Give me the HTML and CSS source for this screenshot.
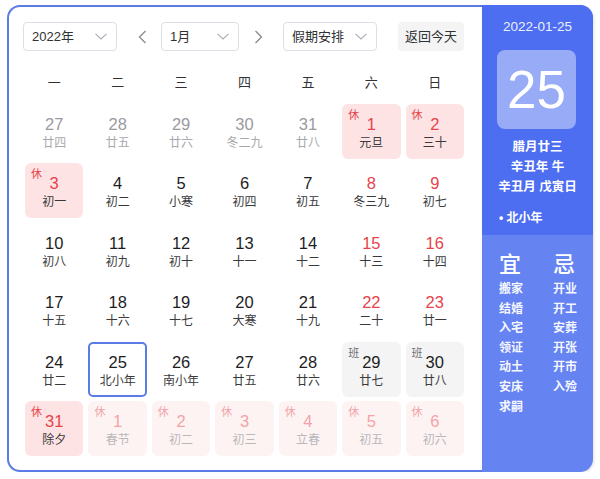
FILE: index.html
```html
<!DOCTYPE html>
<html lang="zh-CN">
<head>
<meta charset="utf-8">
<title>日历</title>
<link rel="stylesheet" href="styles.css">
</head>
<body>
<div class="card">
  <div class="main">
    <div class="toolbar">
      <div class="select sel-year"><span>2022年</span>
        <svg class="chev" width="12" height="7" viewBox="0 0 12 7"><path d="M0.5 0.8 L6 6 L11.5 0.8" fill="none" stroke="#a8abb2" stroke-width="1.1"/></svg>
      </div>
      <div class="arrow arrow-prev"><svg width="9" height="14" viewBox="0 0 9 14"><path d="M7.5 1 L1.5 7 L7.5 13" fill="none" stroke="#8a8d93" stroke-width="1.4"/></svg></div>
      <div class="select sel-month"><span>1月</span>
        <svg class="chev" width="12" height="7" viewBox="0 0 12 7"><path d="M0.5 0.8 L6 6 L11.5 0.8" fill="none" stroke="#a8abb2" stroke-width="1.1"/></svg>
      </div>
      <div class="arrow arrow-next"><svg width="9" height="14" viewBox="0 0 9 14"><path d="M1.5 1 L7.5 7 L1.5 13" fill="none" stroke="#8a8d93" stroke-width="1.4"/></svg></div>
      <div class="select sel-holiday"><span>假期安排</span>
        <svg class="chev" width="12" height="7" viewBox="0 0 12 7"><path d="M0.5 0.8 L6 6 L11.5 0.8" fill="none" stroke="#a8abb2" stroke-width="1.1"/></svg>
      </div>
      <div class="today-btn">返回今天</div>
    </div>

    <div class="weekdays">
      <div>一</div><div>二</div><div>三</div><div>四</div><div>五</div><div>六</div><div>日</div>
    </div>

    <div class="days">
      <div class="day other"><div class="num">27</div><div class="lunar">廿四</div></div>
      <div class="day other"><div class="num">28</div><div class="lunar">廿五</div></div>
      <div class="day other"><div class="num">29</div><div class="lunar">廿六</div></div>
      <div class="day other"><div class="num">30</div><div class="lunar">冬二九</div></div>
      <div class="day other"><div class="num">31</div><div class="lunar">廿八</div></div>
      <div class="day rest"><span class="tag">休</span><div class="num">1</div><div class="lunar">元旦</div></div>
      <div class="day rest"><span class="tag">休</span><div class="num">2</div><div class="lunar">三十</div></div>

      <div class="day rest"><span class="tag">休</span><div class="num">3</div><div class="lunar">初一</div></div>
      <div class="day"><div class="num">4</div><div class="lunar">初二</div></div>
      <div class="day"><div class="num">5</div><div class="lunar">小寒</div></div>
      <div class="day"><div class="num">6</div><div class="lunar">初四</div></div>
      <div class="day"><div class="num">7</div><div class="lunar">初五</div></div>
      <div class="day weekend"><div class="num">8</div><div class="lunar">冬三九</div></div>
      <div class="day weekend"><div class="num">9</div><div class="lunar">初七</div></div>

      <div class="day"><div class="num">10</div><div class="lunar">初八</div></div>
      <div class="day"><div class="num">11</div><div class="lunar">初九</div></div>
      <div class="day"><div class="num">12</div><div class="lunar">初十</div></div>
      <div class="day"><div class="num">13</div><div class="lunar">十一</div></div>
      <div class="day"><div class="num">14</div><div class="lunar">十二</div></div>
      <div class="day weekend"><div class="num">15</div><div class="lunar">十三</div></div>
      <div class="day weekend"><div class="num">16</div><div class="lunar">十四</div></div>

      <div class="day"><div class="num">17</div><div class="lunar">十五</div></div>
      <div class="day"><div class="num">18</div><div class="lunar">十六</div></div>
      <div class="day"><div class="num">19</div><div class="lunar">十七</div></div>
      <div class="day"><div class="num">20</div><div class="lunar">大寒</div></div>
      <div class="day"><div class="num">21</div><div class="lunar">十九</div></div>
      <div class="day weekend"><div class="num">22</div><div class="lunar">二十</div></div>
      <div class="day weekend"><div class="num">23</div><div class="lunar">廿一</div></div>

      <div class="day"><div class="num">24</div><div class="lunar">廿二</div></div>
      <div class="day today"><div class="num">25</div><div class="lunar">北小年</div></div>
      <div class="day"><div class="num">26</div><div class="lunar">南小年</div></div>
      <div class="day"><div class="num">27</div><div class="lunar">廿五</div></div>
      <div class="day"><div class="num">28</div><div class="lunar">廿六</div></div>
      <div class="day work"><span class="tag">班</span><div class="num">29</div><div class="lunar">廿七</div></div>
      <div class="day work"><span class="tag">班</span><div class="num">30</div><div class="lunar">廿八</div></div>

      <div class="day rest"><span class="tag">休</span><div class="num">31</div><div class="lunar">除夕</div></div>
      <div class="day rest-next"><span class="tag">休</span><div class="num">1</div><div class="lunar">春节</div></div>
      <div class="day rest-next"><span class="tag">休</span><div class="num">2</div><div class="lunar">初二</div></div>
      <div class="day rest-next"><span class="tag">休</span><div class="num">3</div><div class="lunar">初三</div></div>
      <div class="day rest-next"><span class="tag">休</span><div class="num">4</div><div class="lunar">立春</div></div>
      <div class="day rest-next"><span class="tag">休</span><div class="num">5</div><div class="lunar">初五</div></div>
      <div class="day rest-next"><span class="tag">休</span><div class="num">6</div><div class="lunar">初六</div></div>
    </div>
  </div>

  <div class="panel">
    <div class="panel-top">
      <div class="p-date">2022-01-25</div>
      <div class="p-big">25</div>
      <div class="p-lines">
        <div>腊月廿三</div>
        <div>辛丑年 牛</div>
        <div>辛丑月 戊寅日</div>
      </div>
      <div class="p-fest">• 北小年</div>
    </div>
    <div class="panel-bottom">
      <div class="yj-col yj-good">
        <div class="yj-title">宜</div>
        <div class="yj-item">搬家</div>
        <div class="yj-item">结婚</div>
        <div class="yj-item">入宅</div>
        <div class="yj-item">领证</div>
        <div class="yj-item">动土</div>
        <div class="yj-item">安床</div>
        <div class="yj-item">求嗣</div>
      </div>
      <div class="yj-col">
        <div class="yj-title">忌</div>
        <div class="yj-item">开业</div>
        <div class="yj-item">开工</div>
        <div class="yj-item">安葬</div>
        <div class="yj-item">开张</div>
        <div class="yj-item">开市</div>
        <div class="yj-item">入殓</div>
      </div>
    </div>
  </div>
</div>
</body>
</html>
```

FILE: styles.css
```css
* { box-sizing: border-box; }
html, body {
  margin: 0;
  padding: 0;
  background: #ffffff;
}
body {
  font-family: "Liberation Sans", "Noto Sans CJK SC", sans-serif;
  color: #303133;
}
.card {
  display: flex;
  margin: 5px 0 0 7px;
  width: 586px;
  height: 467px;
}
.main {
  width: 475px;
  height: 467px;
  border: 2px solid #5b7be6;
  border-right: none;
  border-radius: 13px 0 0 13px;
  padding: 15px 0 0 16px;
  background: #fff;
}
.toolbar {
  display: flex;
  align-items: center;
  height: 29px;
  margin-left: -2px;
}
.select {
  height: 29px;
  border: 1px solid #dcdfe6;
  border-radius: 4px;
  display: flex;
  align-items: center;
  justify-content: space-between;
  padding: 0 9px 0 8px;
  font-size: 13px;
  color: #303133;
}
.select span { line-height: 27px; }
.chev { display: block; }
.sel-year { width: 94px; }
.sel-month { width: 78px; margin-left: 4px; }
.sel-holiday { width: 94px; margin-left: 10px; }
.arrow {
  width: 30px;
  height: 29px;
  display: flex;
  align-items: center;
  justify-content: center;
}
.arrow-prev { margin-left: 10px; }
.arrow-next { margin-left: 4px; }
.today-btn {
  margin-left: 21px;
  width: 66px;
  height: 29px;
  line-height: 29px;
  text-align: center;
  font-size: 13px;
  color: #303133;
  background: #f4f4f5;
  border-radius: 4px;
}
.weekdays {
  display: grid;
  grid-template-columns: repeat(7, 1fr);
  column-gap: 5px;
  width: 439px;
  margin-top: 14px;
  height: 36px;
  line-height: 36px;
  text-align: center;
  font-size: 13px;
  color: #303133;
}
.days {
  display: grid;
  grid-template-columns: repeat(7, 1fr);
  grid-auto-rows: 55px;
  column-gap: 5px;
  row-gap: 4.5px;
  width: 439px;
  margin-top: 2.5px;
}
.day {
  position: relative;
  border-radius: 6px;
  text-align: center;
  padding-top: 9px;
}
.num {
  font-size: 16.5px;
  line-height: 22px;
  color: #1d1d1f;
}
.lunar {
  font-size: 12px;
  line-height: 16px;
  color: #3a3a3c;
}
.tag {
  position: absolute;
  top: 5px;
  left: 6px;
  font-size: 11px;
  line-height: 13px;
}
.other .num { color: #9a9a9e; }
.other .lunar { color: #a9a9ad; }
.weekend .num { color: #e6434b; }
.rest { background: #fde3e4; }
.rest .num { color: #e6434b; }
.rest .tag { color: #e6434b; }
.rest-next { background: #fef3f3; }
.rest-next .num { color: #f2a3a6; }
.rest-next .lunar { color: #b8b8bb; }
.rest-next .tag { color: #f2a3a6; }
.work { background: #f4f4f5; }
.work .tag { color: #707074; }
.today {
  border: 2px solid #5b7be6;
  border-radius: 5px;
  padding-top: 7px;
}
.panel {
  width: 111px;
  height: 467px;
  border-radius: 0 13px 13px 0;
  overflow: hidden;
  color: #ffffff;
  background: #6683f2;
  box-shadow: 1px 1px 3px rgba(0, 0, 0, 0.12);
  font-family: "Liberation Sans", "Noto Sans CJK SC", sans-serif;
}
.panel-top {
  height: 230px;
  background: #4e6ef2;
  padding: 13px 0 0 17px;
}
.p-date {
  margin-left: -17px;
  text-align: center;
  font-size: 13.5px;
  line-height: 18px;
  color: rgba(255, 255, 255, 0.92);
}
.p-big {
  width: 79px;
  height: 79px;
  margin: 14px 0 0 -2px;
  background: rgba(255, 255, 255, 0.42);
  border-radius: 8px;
  text-align: center;
  line-height: 79px;
  font-size: 53px;
  color: #fff;
}
.p-lines {
  margin: 8px 0 0 -17px;
  text-align: center;
  font-size: 12.5px;
  line-height: 20px;
  font-weight: 700;
}
.p-fest {
  margin-top: 12px;
  font-size: 12px;
  line-height: 18px;
  font-weight: 700;
}
.panel-bottom {
  display: flex;
  padding: 17px 0 0 17px;
}
.yj-col { flex: 0 0 auto; }
.yj-good { width: 54px; }
.yj-title {
  font-size: 22px;
  line-height: 26px;
  margin-bottom: 2px;
  font-weight: 500;
}
.yj-item {
  font-size: 12px;
  line-height: 19.6px;
  font-weight: 700;
  color: rgba(255, 255, 255, 0.95);
}
```
